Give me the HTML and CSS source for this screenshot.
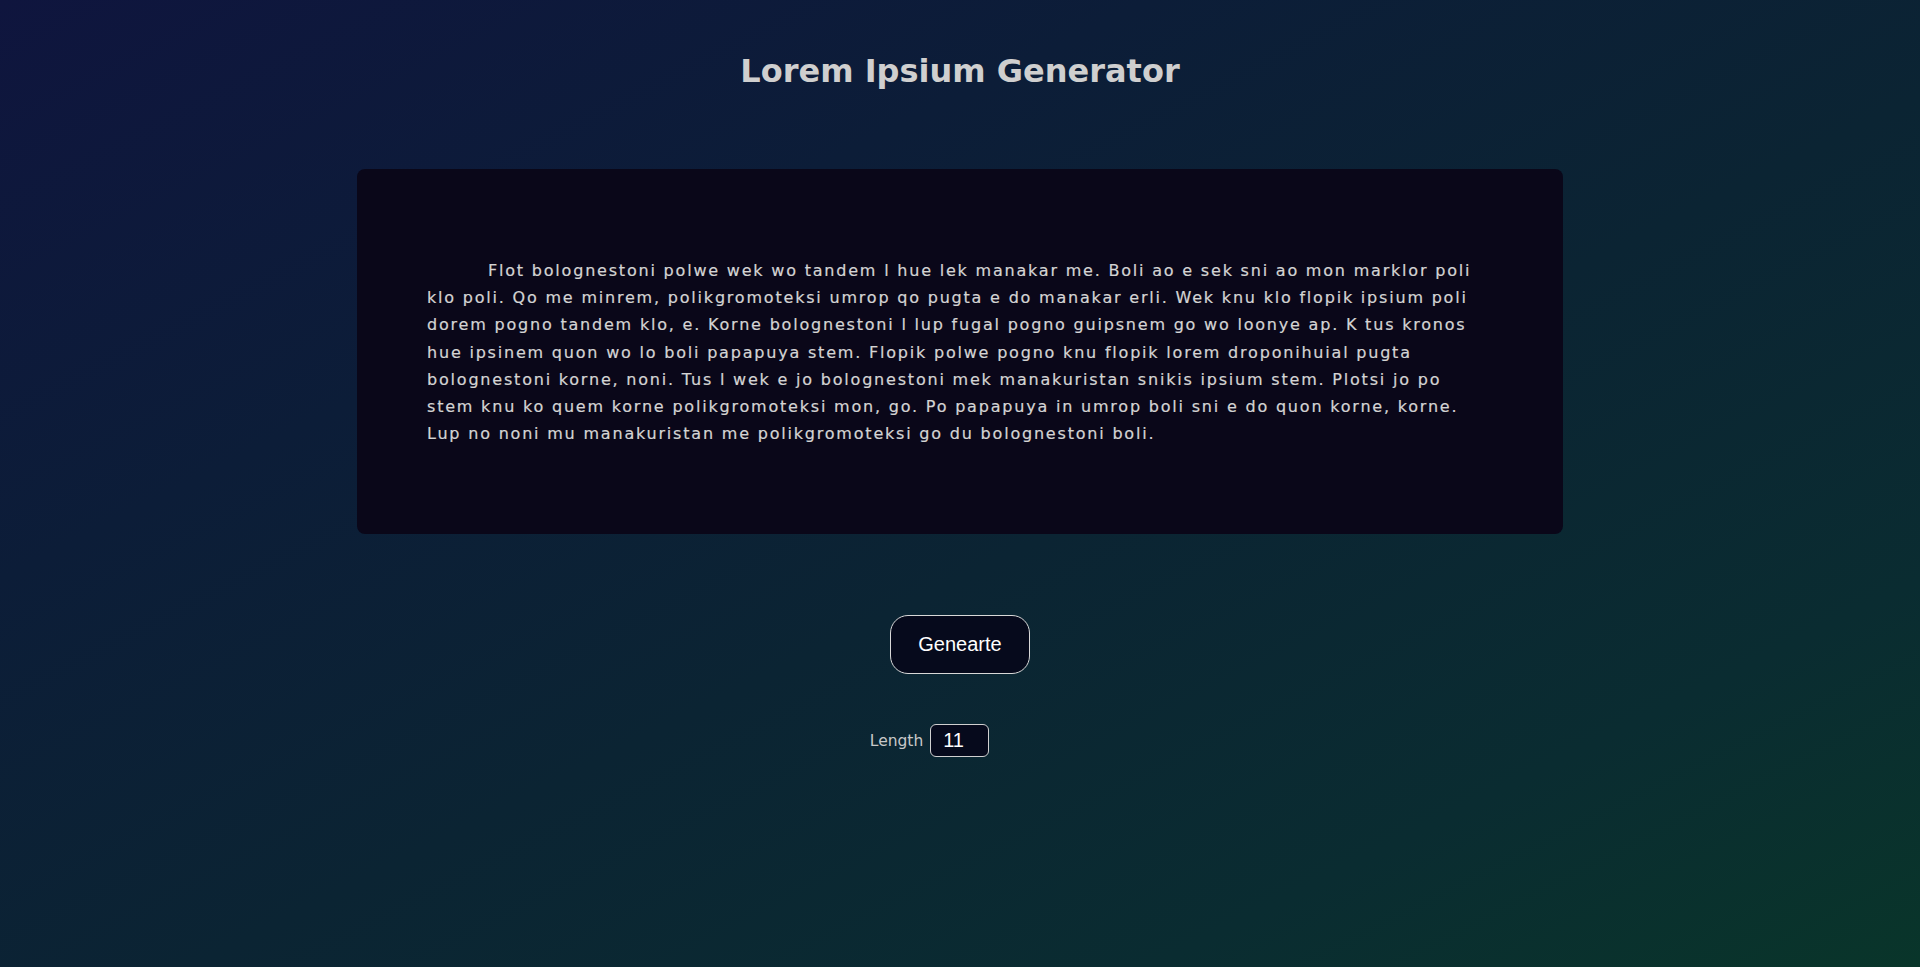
FILE: index.html
```html
<!DOCTYPE html>
<html lang="en">
<head>
<meta charset="utf-8">
<title>Lorem Ipsium Generator</title>
<link rel="stylesheet" href="styles.css">
</head>
<body>
<main class="page">
  <h1 class="title">Lorem Ipsium Generator</h1>
  <section class="card">
    <p class="text">Flot bolognestoni polwe wek wo tandem l hue lek manakar me. Boli ao e sek sni ao mon marklor poli klo poli. Qo me minrem, polikgromoteksi umrop qo pugta e do manakar erli. Wek knu klo flopik ipsium poli dorem pogno tandem klo, e. Korne bolognestoni l lup fugal pogno guipsnem go wo loonye ap. K tus kronos hue ipsinem quon wo lo boli papapuya stem. Flopik polwe pogno knu flopik lorem droponihuial pugta bolognestoni korne, noni. Tus l wek e jo bolognestoni mek manakuristan snikis ipsium stem. Plotsi jo po stem knu ko quem korne polikgromoteksi mon, go. Po papapuya in umrop boli sni e do quon korne, korne. Lup no noni mu manakuristan me polikgromoteksi go du bolognestoni boli.</p>
  </section>
  <button class="btn" type="button">Genearte</button>
  <div class="length-row">
    <label class="length-label" for="len">Length</label>
    <input class="length-input" id="len" type="text" value="11">
  </div>
</main>
</body>
</html>
```

FILE: styles.css
```css
html, body {
  margin: 0;
  padding: 0;
}

body {
  min-height: 100vh;
  background: linear-gradient(to bottom right, #0f153e 0%, #0c1d38 30%, #0b2433 55%, #0a2c31 80%, #09352a 100%);
  font-family: "DejaVu Sans", Verdana, sans-serif;
  color: #d0d0d0;
}

.page {
  display: flex;
  flex-direction: column;
  align-items: center;
  padding-top: 53px;
  box-sizing: border-box;
  min-height: 100vh;
}

.title {
  margin: 0;
  font-size: 32px;
  line-height: 37px;
  font-weight: bold;
  color: #cfcfcf;
}

.card {
  margin-top: 79px;
  width: 1206px;
  box-sizing: border-box;
  padding: 88px 70px 87px;
  background: #0a0719;
  border-radius: 8px;
}

.text {
  margin: 0;
  font-size: 16px;
  line-height: 1.7;
  letter-spacing: 1.8px;
  text-indent: 61px;
  color: #d4d4d4;
  -webkit-text-stroke: 0.2px #d4d4d4;
}

.btn {
  margin-top: 81px;
  padding: 17px 27px;
  border: 1px solid #d8d8d8;
  border-radius: 18px;
  background: #060a1c;
  color: #ffffff;
  font-family: "Liberation Sans", Arial, sans-serif;
  font-size: 20px;
  line-height: 23px;
  cursor: pointer;
}

.length-row {
  margin-top: 50px;
  display: flex;
  align-items: center;
  gap: 7px;
  padding-right: 61px;
}

.length-label {
  font-size: 15.5px;
  color: #c8c8c8;
}

.length-input {
  width: 59px;
  height: 33px;
  box-sizing: border-box;
  padding: 0 0 0 12px;
  border: 1px solid #d0d0d0;
  border-radius: 6px;
  background: #060a1c;
  color: #ffffff;
  font-family: "Liberation Sans", Arial, sans-serif;
  font-size: 20px;
  outline: none;
}
```
